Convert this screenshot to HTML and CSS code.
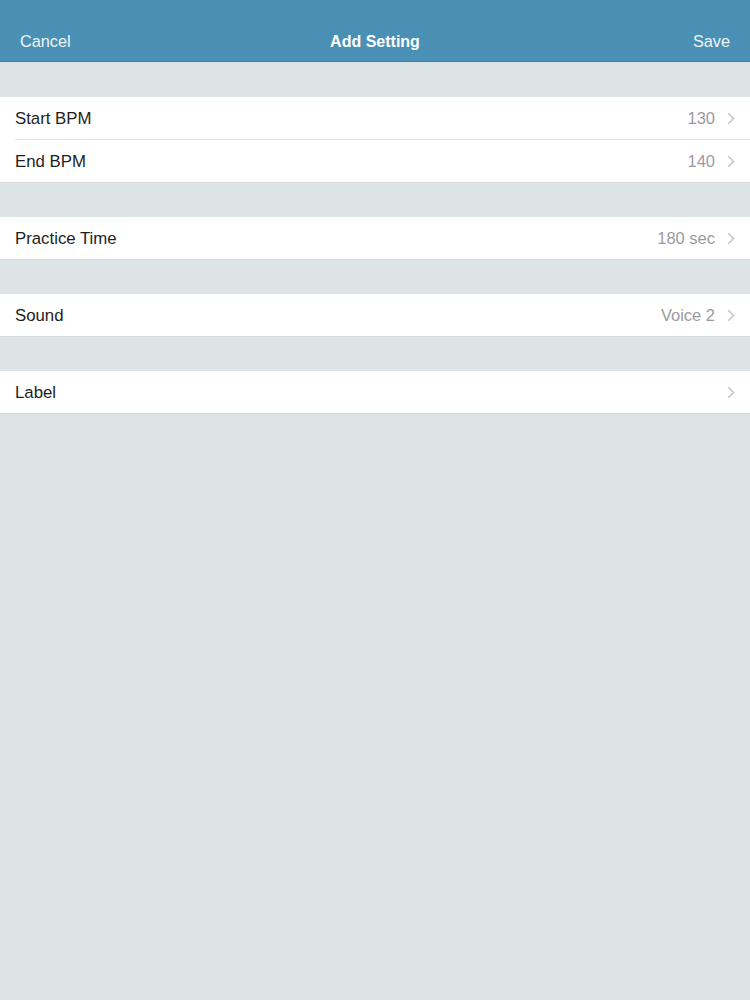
FILE: index.html
```html
<!DOCTYPE html>
<html lang="en">
<head>
<meta charset="utf-8">
<title>Add Setting</title>
<link rel="stylesheet" href="styles.css">
</head>
<body>
<header class="navbar">
  <span class="nav-btn">Cancel</span>
  <span class="nav-title">Add Setting</span>
  <span class="nav-btn">Save</span>
</header>
<main class="content">
  <section class="group">
    <div class="row">
      <span class="label">Start BPM</span>
      <span class="value">130</span>
      <svg class="chev" viewBox="0 0 8 13" width="8" height="13"><path d="M1.2 1.2 L6.5 6.5 L1.2 11.8" fill="none" stroke="#c4c4c9" stroke-width="1.6"/></svg>
    </div>
    <div class="row">
      <span class="label">End BPM</span>
      <span class="value">140</span>
      <svg class="chev" viewBox="0 0 8 13" width="8" height="13"><path d="M1.2 1.2 L6.5 6.5 L1.2 11.8" fill="none" stroke="#c4c4c9" stroke-width="1.6"/></svg>
    </div>
  </section>
  <section class="group">
    <div class="row">
      <span class="label">Practice Time</span>
      <span class="value">180 sec</span>
      <svg class="chev" viewBox="0 0 8 13" width="8" height="13"><path d="M1.2 1.2 L6.5 6.5 L1.2 11.8" fill="none" stroke="#c4c4c9" stroke-width="1.6"/></svg>
    </div>
  </section>
  <section class="group">
    <div class="row">
      <span class="label">Sound</span>
      <span class="value">Voice 2</span>
      <svg class="chev" viewBox="0 0 8 13" width="8" height="13"><path d="M1.2 1.2 L6.5 6.5 L1.2 11.8" fill="none" stroke="#c4c4c9" stroke-width="1.6"/></svg>
    </div>
  </section>
  <section class="group">
    <div class="row">
      <span class="label">Label</span>
      <span class="value"></span>
      <svg class="chev" viewBox="0 0 8 13" width="8" height="13"><path d="M1.2 1.2 L6.5 6.5 L1.2 11.8" fill="none" stroke="#c4c4c9" stroke-width="1.6"/></svg>
    </div>
  </section>
</main>
</body>
</html>
```
FILE: styles.css
```css
html, body {
  margin: 0;
  padding: 0;
}
body {
  width: 750px;
  min-height: 1000px;
  background: #dde4e6;
  font-family: "Liberation Sans", Arial, sans-serif;
  -webkit-font-smoothing: antialiased;
}
.navbar {
  height: 62px;
  box-sizing: border-box;
  background: #4a8fb4;
  border-bottom: 1px solid #3f7fa3;
  display: flex;
  align-items: center;
  justify-content: space-between;
  padding: 22px 20px 0 20px;
  position: relative;
  color: #ffffff;
}
.nav-btn {
  font-size: 16.3px;
  color: #eef5f9;
}
.nav-title {
  position: absolute;
  left: 0;
  right: 0;
  top: 22px;
  bottom: 0;
  display: flex;
  align-items: center;
  justify-content: center;
  font-size: 16px;
  font-weight: bold;
  pointer-events: none;
}
.content {
  display: flex;
  flex-direction: column;
  gap: 35px;
  padding-top: 35px;
}
.group {
  background: #ffffff;
  box-shadow: 0 1px 0 #d4dadc;
}
.row {
  height: 42px;
  display: flex;
  align-items: center;
  padding-left: 15px;
  padding-right: 15px;
  position: relative;
}
.row + .row {
  border-top: 1px solid #e2e2e4;
  margin-left: 15px;
  padding-left: 0;
}
.label {
  flex: 1;
  font-size: 16.8px;
  color: #1e1e1e;
  padding-top: 1px;
}
.value {
  font-size: 16.5px;
  color: #9b9b9f;
  margin-right: 12px;
  padding-top: 1px;
}
.chev {
  display: block;
}
```
